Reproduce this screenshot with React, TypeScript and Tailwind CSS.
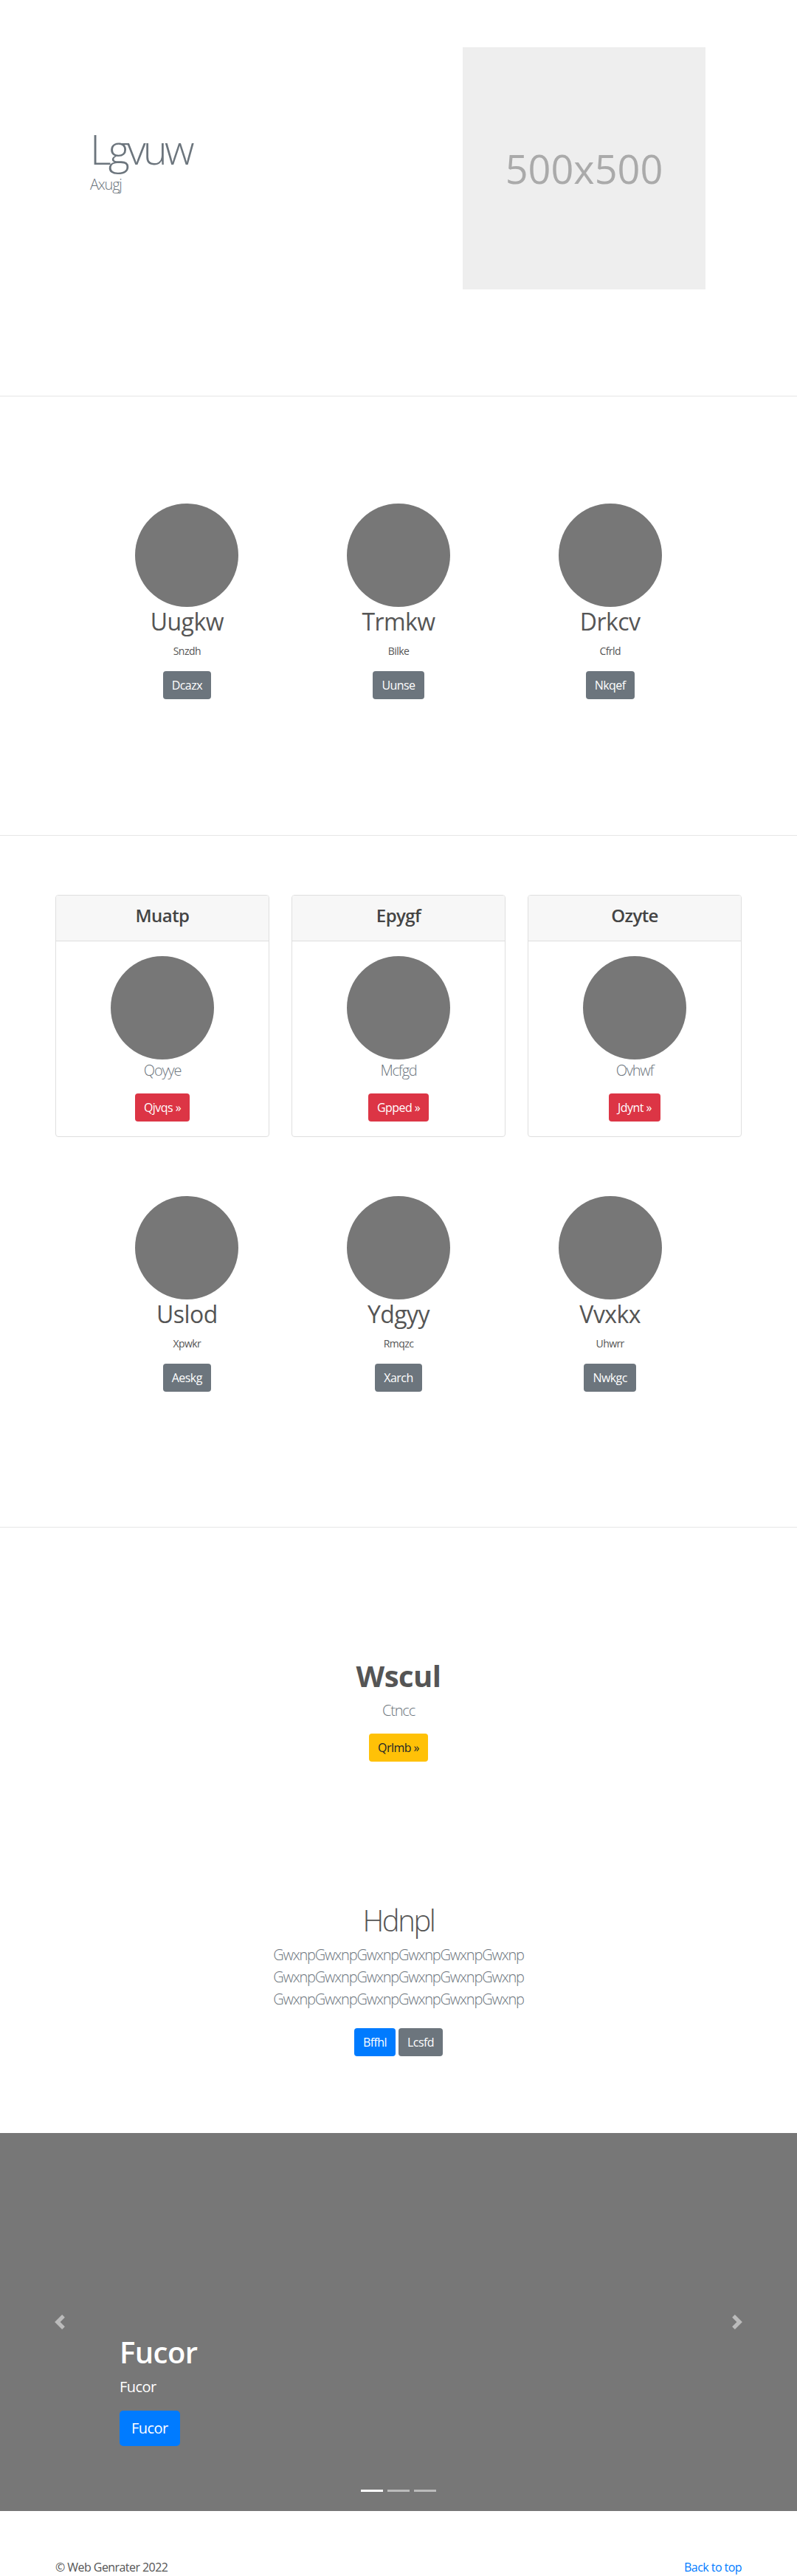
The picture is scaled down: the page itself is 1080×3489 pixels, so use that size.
import React from "react";

const font = "font-['Open_Sans','Noto_Sans',sans-serif]";

const rowOne = [
  { name: "Uugkw", sub: "Snzdh", btn: "Dcazx" },
  { name: "Trmkw", sub: "Bilke", btn: "Uunse" },
  { name: "Drkcv", sub: "Cfrld", btn: "Nkqef" },
];

const rowTwo = [
  { name: "Uslod", sub: "Xpwkr", btn: "Aeskg" },
  { name: "Ydgyy", sub: "Rmqzc", btn: "Xarch" },
  { name: "Vvxkx", sub: "Uhwrr", btn: "Nwkgc" },
];

const cards = [
  { title: "Muatp", text: "Qoyye", btn: "Qjvqs »" },
  { title: "Epygf", text: "Mcfgd", btn: "Gpped »" },
  { title: "Ozyte", text: "Ovhwf", btn: "Jdynt »" },
];

type Item = { name: string; sub: string; btn: string };

function CircleRow({ items }: { items: Item[] }) {
  return (
    <div className="mx-auto grid w-[860px] grid-cols-3">
      {items.map((it) => (
        <div key={it.name} className="flex flex-col items-center">
          <div className="h-[140px] w-[140px] rounded-full bg-[#777]" />
          <h2 className="mt-px text-[32px] font-normal leading-[38px] text-[#555]">{it.name}</h2>
          <p className="mt-[10px] text-sm leading-[21px] text-[#555]">{it.sub}</p>
          <button className="mt-[17px] rounded bg-[#6c757d] px-3 py-[7px] text-base leading-6 text-white">
            {it.btn}
          </button>
        </div>
      ))}
    </div>
  );
}

function Chevron({ dir }: { dir: "prev" | "next" }) {
  const d =
    dir === "prev"
      ? "M5.25 0l-4 4 4 4 1.5-1.5L4.25 4l2.5-2.5L5.25 0z"
      : "M2.75 0l-1.5 1.5L3.75 4l-2.5 2.5L2.75 8l4-4-4-4z";
  return (
    <svg viewBox="0 0 8 8" width="20" height="20" fill="#fff" opacity="0.5">
      <path d={d} />
    </svg>
  );
}

export default function App() {
  return (
    <div className={`bg-white tracking-[-0.035em] text-[#555] ${font}`}>
      {/* Hero */}
      <section className="h-[537px] border-b border-[#e6e6e6]">
        <div className="mx-auto flex w-[960px] pt-16">
          <div className="w-1/2 pl-[62px] pt-[104px]">
            <h1 className="text-[56px] font-light leading-[67px] tracking-[-0.07em] text-[#6c757d]">Lgvuw</h1>
            <p className="text-xl font-light leading-[30px] tracking-[-0.06em] text-[#6c757d]">Axugj</p>
          </div>
          <div className="flex w-1/2 justify-end pr-[64px]">
            <div className="flex h-[328px] w-[329px] items-center justify-center bg-[#eee] text-[54px] tracking-normal text-[#aaa]">
              500x500
            </div>
          </div>
        </div>
      </section>

      {/* Circles */}
      <section className="h-[595px] border-b border-[#e6e6e6] pt-[145px]">
        <CircleRow items={rowOne} />
      </section>

      {/* Cards + circles */}
      <section className="h-[937px] border-b border-[#e6e6e6] pt-[80px]">
        <div className="mx-auto grid w-[930px] grid-cols-3 gap-[30px]">
          {cards.map((c) => (
            <div key={c.title} className="overflow-hidden rounded border border-[#dfdfdf] text-center">
              <div className="border-b border-[#dfdfdf] bg-[#f7f7f7] px-5 pt-3 pb-5">
                <h4 className="text-2xl font-semibold leading-[29px] text-[#444]">{c.title}</h4>
              </div>
              <div className="flex flex-col items-center p-5">
                <div className="h-[140px] w-[140px] rounded-full bg-[#777]" />
                <p className="text-xl font-light leading-[30px] tracking-[-0.06em] text-[#6c757d]">{c.text}</p>
                <button className="mt-4 rounded bg-[#dc3545] px-3 py-[7px] text-base leading-6 text-white">
                  {c.btn}
                </button>
              </div>
            </div>
          ))}
        </div>
        <div className="mt-[80px]">
          <CircleRow items={rowTwo} />
        </div>
      </section>

      {/* Call to action */}
      <section className="flex h-[820px] flex-col items-center pt-[177px] text-center">
        <h1 className="text-[40px] font-bold leading-[48px] text-[#555]">Wscul</h1>
        <p className="mt-2 text-xl font-light leading-[30px] tracking-[-0.06em] text-[#6c757d]">Ctncc</p>
        <button className="mt-4 rounded bg-[#ffc107] px-3 py-[7px] text-base leading-6 text-[#212529]">
          Qrlmb »
        </button>
        <h1 className="mt-[191px] text-[40px] font-light leading-[48px] tracking-[-0.06em] text-[#555]">Hdnpl</h1>
        <div className="mt-2 text-xl font-light leading-[30px] tracking-[-0.06em] text-[#6c757d]">
          <p>GwxnpGwxnpGwxnpGwxnpGwxnpGwxnp</p>
          <p>GwxnpGwxnpGwxnpGwxnpGwxnpGwxnp</p>
          <p>GwxnpGwxnpGwxnpGwxnpGwxnpGwxnp</p>
        </div>
        <div className="mt-6 flex gap-1">
          <button className="rounded bg-[#007bff] px-3 py-[7px] text-base leading-6 text-white">Bffhl</button>
          <button className="rounded bg-[#6c757d] px-3 py-[7px] text-base leading-6 text-white">Lcsfd</button>
        </div>
      </section>

      {/* Carousel */}
      <div className="relative h-[512px] bg-[#777]">
        <div className="absolute left-[71px] top-1/2 -translate-y-1/2">
          <Chevron dir="prev" />
        </div>
        <div className="absolute right-[71px] top-1/2 -translate-y-1/2">
          <Chevron dir="next" />
        </div>
        <div className="absolute bottom-[88px] left-[162px] text-white">
          <h1 className="text-[40px] font-semibold leading-[48px]">Fucor</h1>
          <p className="mt-2 text-xl leading-[30px]">Fucor</p>
          <button className="mt-[17px] rounded-[5px] bg-[#007bff] px-4 py-[9px] text-xl leading-[30px] text-white">
            Fucor
          </button>
        </div>
        <div className="absolute bottom-[26px] left-1/2 flex -translate-x-1/2 gap-[6px]">
          <span className="h-[3px] w-[30px] bg-white" />
          <span className="h-[3px] w-[30px] bg-white/50" />
          <span className="h-[3px] w-[30px] bg-white/50" />
        </div>
      </div>

      {/* Footer */}
      <footer className="mx-auto mt-16 flex h-6 w-[930px] justify-between text-base leading-6">
        <p className="text-[#555]">© Web Genrater 2022</p>
        <a href="#" className="text-[#007bff]">Back to top</a>
      </footer>
    </div>
  );
}
